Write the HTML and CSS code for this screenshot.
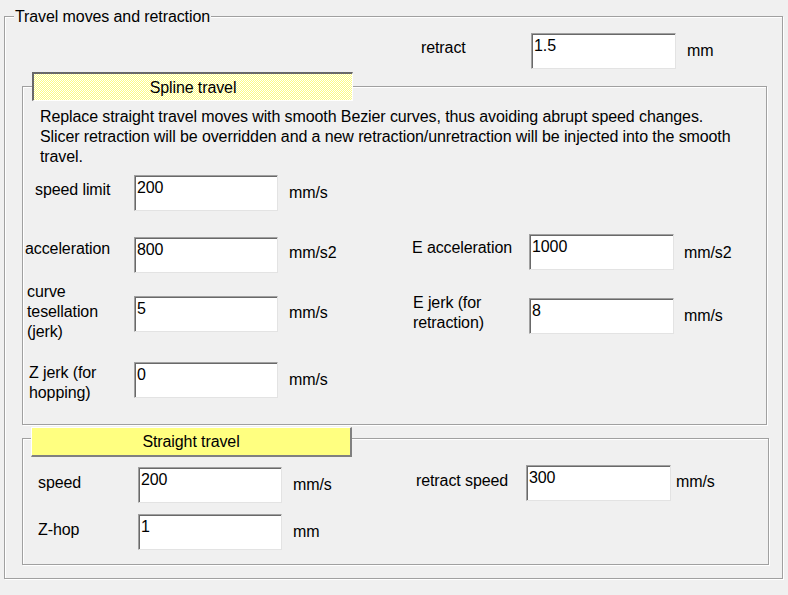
FILE: index.html
```html
<!DOCTYPE html>
<html lang="en">
<head>
<meta charset="utf-8">
<title>Travel moves and retraction</title>
<link rel="stylesheet" href="styles.css">
</head>
<body>
<div class="group outer">
  <div class="group-title">Travel moves and retraction</div>

  <div class="row retract-row">
    <span class="lbl lbl-retract">retract</span>
    <div class="field w145">1.5</div>
    <span class="unit unit-retract">mm</span>
  </div>

  <div class="group spline">
    <div class="toggle toggle-on">Spline travel</div>
    <p class="desc">Replace straight travel moves with smooth Bezier curves, thus avoiding abrupt speed changes.<br>Slicer retraction will be overridden and a new retraction/unretraction will be injected into the smooth<br>travel.</p>

    <div class="row sp-row r1">
      <span class="lbl sp-l1 pl12 up3">speed limit</span>
      <div class="field w144">200</div>
      <span class="unit sp-u1">mm/s</span>
    </div>

    <div class="row sp-row r2">
      <span class="lbl sp-l1 pl2 up6">acceleration</span>
      <div class="field w144">800</div>
      <span class="unit sp-u1 up2">mm/s2</span>
      <span class="lbl sp-l2 up7">E acceleration</span>
      <div class="field w145 up3">1000</div>
      <span class="unit sp-u2 up2">mm/s2</span>
    </div>

    <div class="row sp-row r3">
      <span class="lbl sp-l1 pl4 multi up2">curve<br>tesellation<br>(jerk)</span>
      <div class="field w144">5</div>
      <span class="unit sp-u1 up1">mm/s</span>
      <span class="lbl sp-l2 pl1 multi up1">E jerk (for<br>retraction)</span>
      <div class="field w145 dn2">8</div>
      <span class="unit sp-u2 dn2">mm/s</span>
    </div>

    <div class="row sp-row r4">
      <span class="lbl sp-l1 pl6 multi dn3">Z jerk (for<br>hopping)</span>
      <div class="field w144">0</div>
      <span class="unit sp-u1">mm/s</span>
    </div>
  </div>

  <div class="group straight">
    <div class="toggle toggle-off">Straight travel</div>

    <div class="row st-row s1">
      <span class="lbl st-l1 up2">speed</span>
      <div class="field w144">200</div>
      <span class="unit st-u1">mm/s</span>
      <span class="lbl st-l2 up4">retract speed</span>
      <div class="field w145 up2">300</div>
      <span class="unit st-u2 up3">mm/s</span>
    </div>

    <div class="row st-row s2">
      <span class="lbl st-l1 up2">Z-hop</span>
      <div class="field w144">1</div>
      <span class="unit st-u1">mm</span>
    </div>
  </div>
</div>
</body>
</html>
```

FILE: styles.css
```css
* {
  box-sizing: border-box;
}

html, body {
  margin: 0;
  padding: 0;
  background: #f0f0f0;
}

body {
  width: 788px;
  height: 595px;
  overflow: hidden;
  font-family: "Liberation Sans", Arial, sans-serif;
  font-size: 16px;
  letter-spacing: -0.1px;
  line-height: 16px;
  color: #000;
}

/* etched group boxes */
.group {
  border: 1px solid #a0a0a0;
  box-shadow: 1px 1px 0 #fff, inset 1px 1px 0 #fff;
}

.outer {
  margin: 16px 0 0 4px;
  width: 779px;
  height: 563px;
}

.group-title {
  width: fit-content;
  margin: -9px 0 0 9px;
  padding: 0 1px;
  background: #f0f0f0;
  line-height: 17px;
}

/* generic row */
.row {
  display: flex;
  align-items: center;
  height: 36px;
}

.lbl,
.unit {
  flex: none;
  white-space: nowrap;
}

.multi {
  line-height: 20px;
}

.field {
  flex: none;
  height: 36px;
  background: #fff;
  border: 1px solid;
  border-color: #a0a0a0 #e3e3e3 #e3e3e3 #a0a0a0;
  box-shadow: inset 1px 1px 0 #696969;
  padding: 4px 2px 0 2px;
  line-height: 16px;
  white-space: nowrap;
}

.w144 { width: 144px; }
.w145 { width: 145px; }

/* vertical nudges */
.up1 { margin-bottom: 2px; }
.up2 { margin-bottom: 4px; }
.up3 { margin-bottom: 6px; }
.up4 { margin-bottom: 8px; }
.up5 { margin-bottom: 10px; }
.up6 { margin-bottom: 12px; }
.up7 { margin-bottom: 14px; }
.dn2 { margin-top: 4px; }
.dn3 { margin-top: 6px; }

.pl1 { padding-left: 1px; }
.pl2 { padding-left: 2px; }
.pl4 { padding-left: 4px; }
.pl6 { padding-left: 6px; }
.pl12 { padding-left: 12px; }

/* retract row */
.retract-row {
  margin-top: 8px;
}

.lbl-retract {
  width: 110px;
  margin-left: 416px;
  margin-bottom: 6px;
}

.unit-retract {
  margin-left: 11px;
}

/* toggle buttons */
.toggle {
  width: 321px;
  text-align: center;
  white-space: nowrap;
}

.toggle-on {
  height: 29px;
  margin: -15px 0 0 9px;
  border-style: solid;
  border-width: 2px 1px 1px 2px;
  border-color: #696969 #fff #fff #696969;
  background: repeating-conic-gradient(#ffff80 0 25%, #ffffff 0 50%) 0 0 / 2px 2px;
  padding-top: 6px;
}

.toggle-off {
  height: 30px;
  margin: -12px 0 0 8px;
  border-style: solid;
  border-width: 1px 2px 2px 1px;
  border-color: #fff #808080 #808080 #fff;
  background: #ffff80;
  padding-top: 6px;
}

/* spline travel group */
.spline {
  margin: 17px 0 0 17px;
  width: 745px;
  height: 339px;
}

.desc {
  margin: 6px 0 0;
  padding-left: 17px;
  line-height: 20px;
  white-space: nowrap;
}

.r1 { margin-top: 8px; }
.r2 { margin-top: 26px; }
.r3 { margin-top: 23px; }
.r4 { margin-top: 30px; }

.sp-l1 { width: 111px; }
.sp-u1 { width: 123px; margin-left: 11px; }
.sp-l2 { width: 117px; }
.sp-u2 { margin-left: 10px; }

/* straight travel group */
.straight {
  margin: 13px 0 0 17px;
  width: 747px;
  height: 127px;
}

.s1 { margin-top: 10px; }
.s2 { margin-top: 11px; }

.st-l1 { width: 115px; padding-left: 15px; }
.st-u1 { width: 123px; margin-left: 11px; }
.st-l2 { width: 110px; }
.st-u2 { margin-left: 5px; }
```
